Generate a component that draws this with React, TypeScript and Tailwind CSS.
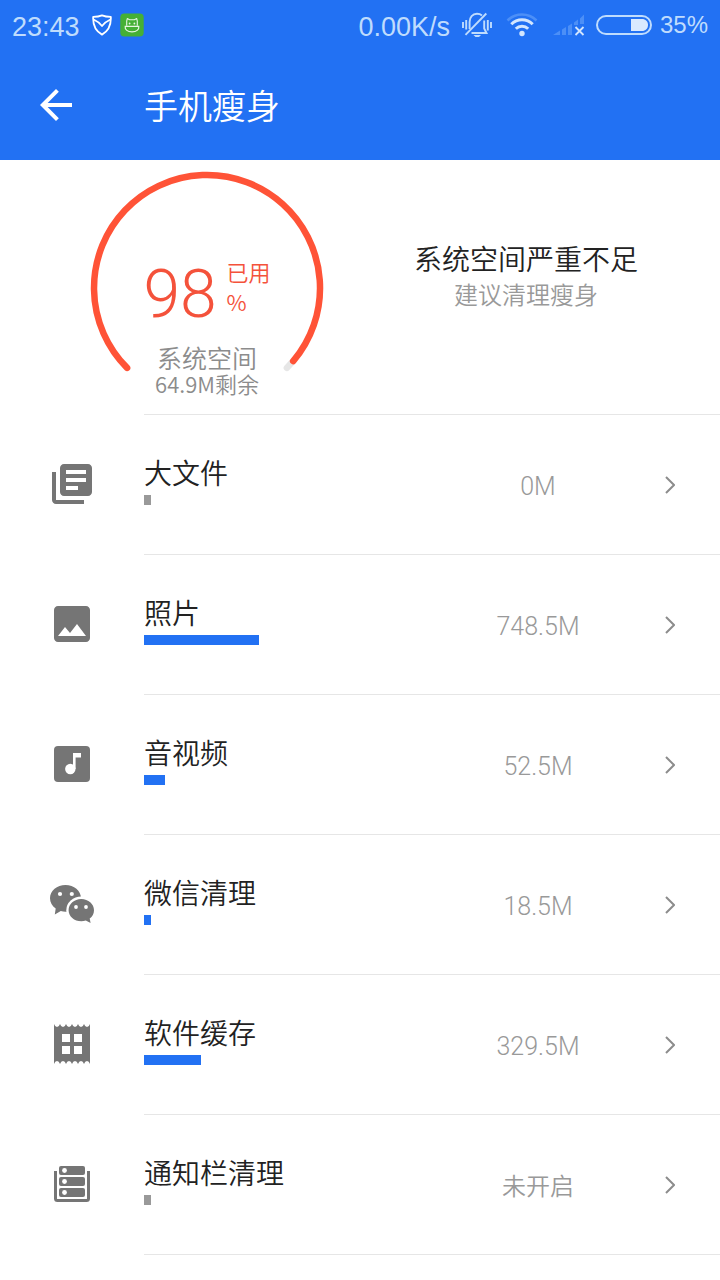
import type { ReactNode } from "react";
import { MdArrowBack, MdImage, MdLibraryBooks } from "react-icons/md";

function ShieldIcon() {
  return (
    <svg viewBox="0 0 20 22" className="h-[22px] w-5" fill="none" stroke="#fff" strokeWidth="1.8" strokeLinejoin="round">
      <path d="M10 1.300C7 2.500 4.200 2.800 1.200 2.900C0.800 10.500 3.600 17 10 20.600C16.400 17 19.200 10.500 18.800 2.900C15.800 2.800 13 2.500 10 1.300Z" />
      <path d="M1.600 5.500C5 7 8 9.500 10 12C12 9.500 15 7 18.400 5.500" />
    </svg>
  );
}

function HippoIcon() {
  return (
    <svg viewBox="0 0 24 24" className="size-6" fill="none">
      <rect x="0.300" y="0.500" width="23.400" height="23" rx="4" fill="#45b035" />
      <path d="M6.700 12.700V8.200L7.300 5.600L9.600 6.700H14.400L16.700 5.600L17.300 8.200V12.700" stroke="#e6f6e2" strokeWidth="1.100" strokeLinejoin="round" />
      <path d="M5.200 13.300H18.800C19.300 16.800 16.300 18.800 12 18.800C7.700 18.800 4.700 16.800 5.200 13.300Z" stroke="#e6f6e2" strokeWidth="1.200" />
      <circle cx="9.600" cy="10.500" r="0.900" fill="#e6f6e2" />
      <circle cx="14.400" cy="10.500" r="0.900" fill="#e6f6e2" />
    </svg>
  );
}

function MutedBellIcon() {
  return (
    <svg viewBox="0 0 30 26" className="h-[26px] w-[30px]" fill="none" stroke="#bfdcfd" strokeWidth="1.900">
      <path d="M1 10V16M4.200 8V17.500M25.800 8V18.500M29 10V16" />
      <path d="M7.600 17V10C7.600 5 10.500 1.800 15 1.800C17 1.800 18.700 2.400 20 3.500M22.200 8.500V16.500L24.500 21H9.500" />
      <path d="M3.500 22.800L24.300 1.500" />
      <path d="M11.500 23H19L17 25H13.500Z" fill="#bfdcfd" stroke="none" />
    </svg>
  );
}

function WifiIcon() {
  return (
    <svg viewBox="0 0 32 26" className="h-[26px] w-8" fill="none" stroke="#d3e6fe" strokeWidth="3">
      <path d="M1.500 8.500C9.500 0.500 22.500 0.500 30.500 8.500" stroke="#4c8ff7" strokeWidth="2.500" />
      <path d="M5.300 12.300C11.300 6.300 20.700 6.300 26.700 12.300" />
      <path d="M9.800 16.800C13.300 13.300 18.700 13.300 22.200 16.800" />
      <circle cx="16" cy="21.500" r="2.700" fill="#d3e6fe" stroke="none" />
    </svg>
  );
}

function NoSignalIcon() {
  return (
    <svg viewBox="0 0 34 26" className="h-[26px] w-[34px]" fill="none">
      <path d="M1 23L8 18.500V23ZM10 17.500L14 15V23H10ZM16 14L20 11.500V23H16ZM22 10.500L26 7.500V13H22ZM28 6.500L32 2.500V12H28Z" fill="#4c8ff7" />
      <path d="M23.500 15L31.500 23M31.500 15L23.500 23" stroke="#d3e6fe" strokeWidth="1.800" />
    </svg>
  );
}

function BatteryIcon() {
  return (
    <svg viewBox="0 0 56 20" className="h-5 w-14" fill="none">
      <rect x="1" y="1" width="54" height="18" rx="9" stroke="#bfdcfd" strokeWidth="2" />
      <path d="M35 4H46C49.500 4 52 6.500 52 10C52 13.500 49.500 16 46 16H35Z" fill="#d9e9fe" />
    </svg>
  );
}

function MusicIcon() {
  return (
    <svg viewBox="0 0 48 48" className="size-12">
      <rect x="6" y="6" width="36" height="36" rx="4" fill="currentColor" />
      <path d="M25 13H33V17.600H27.600V29H25Z" fill="#fff" />
      <circle cx="22.300" cy="29" r="5.200" fill="#fff" />
    </svg>
  );
}

function WechatIcon() {
  return (
    <svg viewBox="0 0 48 48" className="size-12" fill="currentColor">
      <path d="M17.500 5C9 5 2 10.900 2 18.300C2 22.500 4.200 26 7.700 28.500L6.800 34.600L12.800 31.100C14.300 31.500 15.900 31.700 17.500 31.700C26 31.700 33 25.700 33 18.300C33 10.900 26 5 17.500 5Z" />
      <ellipse cx="33.300" cy="30.200" rx="15" ry="13.600" fill="#fff" />
      <path d="M33.300 19C26.200 19 20.600 24 20.600 30.200C20.600 36.300 26.200 41.300 33.300 41.300C34.900 41.300 36.400 41.100 37.800 40.600L42.600 43L41.700 38.600C44.400 36.600 46 33.600 46 30.200C46 24 40.300 19 33.300 19Z" />
      <g fill="#fff">
        <circle cx="12" cy="14" r="2.100" />
        <circle cx="23.800" cy="14" r="2.100" />
        <circle cx="28" cy="27" r="1.900" />
        <circle cx="38" cy="27" r="1.900" />
      </g>
    </svg>
  );
}

function CacheIcon() {
  return (
    <svg viewBox="0 0 48 48" className="size-12">
      <path
        d="M6 4Q7 7 9 7T12 4Q13 7 15 7T18 4Q19 7 21 7T24 4Q25 7 27 7T30 4Q31 7 33 7T36 4Q37 7 39 7T42 4V44Q41 41 39 41T36 44Q35 41 33 41T30 44Q29 41 27 41T24 44Q23 41 21 41T18 44Q17 41 15 41T12 44Q11 41 9 41T6 44Z"
        fill="currentColor"
      />
      <path d="M14 14H22V22H14ZM26 14H34V22H26ZM14 26H22V34H14ZM26 26H34V34H26Z" fill="#fff" />
    </svg>
  );
}

function NoticeIcon() {
  return (
    <svg viewBox="0 0 48 48" className="size-12">
      <path d="M7.500 11V38.500Q7.500 40.500 9.500 40.500H38.500Q40.500 40.500 40.500 38.500V11" fill="none" stroke="currentColor" strokeWidth="3" />
      <g fill="currentColor">
        <rect x="11" y="6" width="26" height="9" rx="2" />
        <rect x="11" y="17" width="26" height="9" rx="2" />
        <rect x="11" y="28" width="26" height="9" rx="2" />
      </g>
      <g fill="#fff">
        <circle cx="16.500" cy="10.500" r="2.400" />
        <circle cx="16.500" cy="21.500" r="2.400" />
        <circle cx="16.500" cy="32.500" r="2.400" />
      </g>
    </svg>
  );
}

type Item = { label: string; value: string; bar: number; empty?: boolean; icon: ReactNode };

const items: Item[] = [
  { label: "大文件", value: "0M", bar: 7, empty: true, icon: <MdLibraryBooks className="size-12" /> },
  { label: "照片", value: "748.5M", bar: 115, icon: <MdImage className="size-12" /> },
  { label: "音视频", value: "52.5M", bar: 21, icon: <MusicIcon /> },
  { label: "微信清理", value: "18.5M", bar: 7, icon: <WechatIcon /> },
  { label: "软件缓存", value: "329.5M", bar: 57, icon: <CacheIcon /> },
  { label: "通知栏清理", value: "未开启", bar: 7, empty: true, icon: <NoticeIcon /> },
];

function Row({ item }: { item: Item }) {
  const isText = !/\d/.test(item.value);
  return (
    <li>
      <button type="button" className="flex h-[140px] w-full items-stretch text-left">
        <span className="flex w-36 shrink-0 items-center justify-center pb-0.5 text-[#757575]">{item.icon}</span>
        <span className="flex min-w-0 flex-1 items-center border-b border-[#e6e6e6]">
          <span className="flex min-w-0 flex-1 flex-col gap-1 pb-3">
            <span className="text-[28px] leading-[38px] text-[#222]">{item.label}</span>
            <span className={item.empty ? "h-2.5 bg-[#999]" : "h-2.5 bg-[#2271f3]"} style={{ width: item.bar }} />
          </span>
          <span
            className={
              isText
                ? "w-[164px] text-center text-2xl text-[#999]"
                : "w-[164px] pt-1 text-center font-[Roboto,sans-serif] text-[25px] text-[#999]"
            }
          >
            {item.value}
          </span>
          <span className="flex w-[100px] justify-center">
            <svg viewBox="0 0 10 18" className="h-[18px] w-2.5" fill="none" stroke="#8c8c8c" strokeWidth="2">
              <path d="M1 1L9 9L1 17" />
            </svg>
          </span>
        </span>
      </button>
    </li>
  );
}

export default function App() {
  return (
    <div className="min-h-screen bg-white font-['Noto_Sans_CJK_SC',sans-serif] font-[350]">
      <header className="bg-[#2271f3]">
        <div className="flex h-[50px] items-center justify-between px-3 font-['Liberation_Sans',sans-serif] text-[27px] font-normal text-[#bfdcfd]">
          <div className="flex items-center">
            <span className="pt-1">23:43</span>
            <span className="ml-3 flex items-center gap-2">
              <ShieldIcon />
              <HippoIcon />
            </span>
          </div>
          <div className="flex items-center">
            <span className="pt-1">0.00K/s</span>
            <span className="ml-3 flex items-center gap-3.5">
              <MutedBellIcon />
              <WifiIcon />
              <NoSignalIcon />
            </span>
            <span className="mr-2 ml-2.5">
              <BatteryIcon />
            </span>
            <span className="text-2xl">35%</span>
          </div>
        </div>
        <div className="flex h-[110px] items-center gap-16 pl-8 text-white">
          <button type="button" aria-label="返回">
            <MdArrowBack className="size-12" />
          </button>
          <h1 className="pb-0.5 text-[34px] font-[350]">手机瘦身</h1>
        </div>
      </header>

      <main>
        <section className="flex gap-2 pt-2.5 pl-[90px]">
          <div className="grid w-[234px] shrink-0">
            <svg viewBox="0 0 234 234" className="col-start-1 row-start-1 size-[234px]" fill="none" strokeWidth="6.500" strokeLinecap="round">
              <path d="M203.200 190.800L196.900 197.900" stroke="#e6e6e6" />
              <path d="M37.100 197.900A113 113 0 1 1 203.200 191.100" stroke="#ff5337" />
            </svg>
            <div className="col-start-1 row-start-1 flex flex-col items-center pt-[86px]">
              <div className="flex items-start gap-2.5 text-[#f4523b]">
                <span className="pt-1 font-[Roboto,sans-serif] text-[66px] leading-[70px] font-light">98</span>
                <span className="flex flex-col text-[22px] leading-[30px]">
                  <span>已用</span>
                  <span>%</span>
                </span>
              </div>
              <span className="pt-3.5 text-[25px] leading-[26px] text-[#8c8c8c]">系统空间</span>
              <span className="text-[22px] leading-[26px] text-[#8c8c8c]">64.9M剩余</span>
            </div>
          </div>
          <div className="flex-1 pt-[68px] text-center">
            <h2 className="text-[28px] leading-10 font-[350] text-[#222]">系统空间严重不足</h2>
            <p className="text-2xl leading-8 text-[#999]">建议清理瘦身</p>
          </div>
        </section>
        <div className="mt-2.5 ml-36 border-t border-[#e6e6e6]" />
        <ul>
          {items.map((item) => (
            <Row key={item.label} item={item} />
          ))}
        </ul>
      </main>
    </div>
  );
}
